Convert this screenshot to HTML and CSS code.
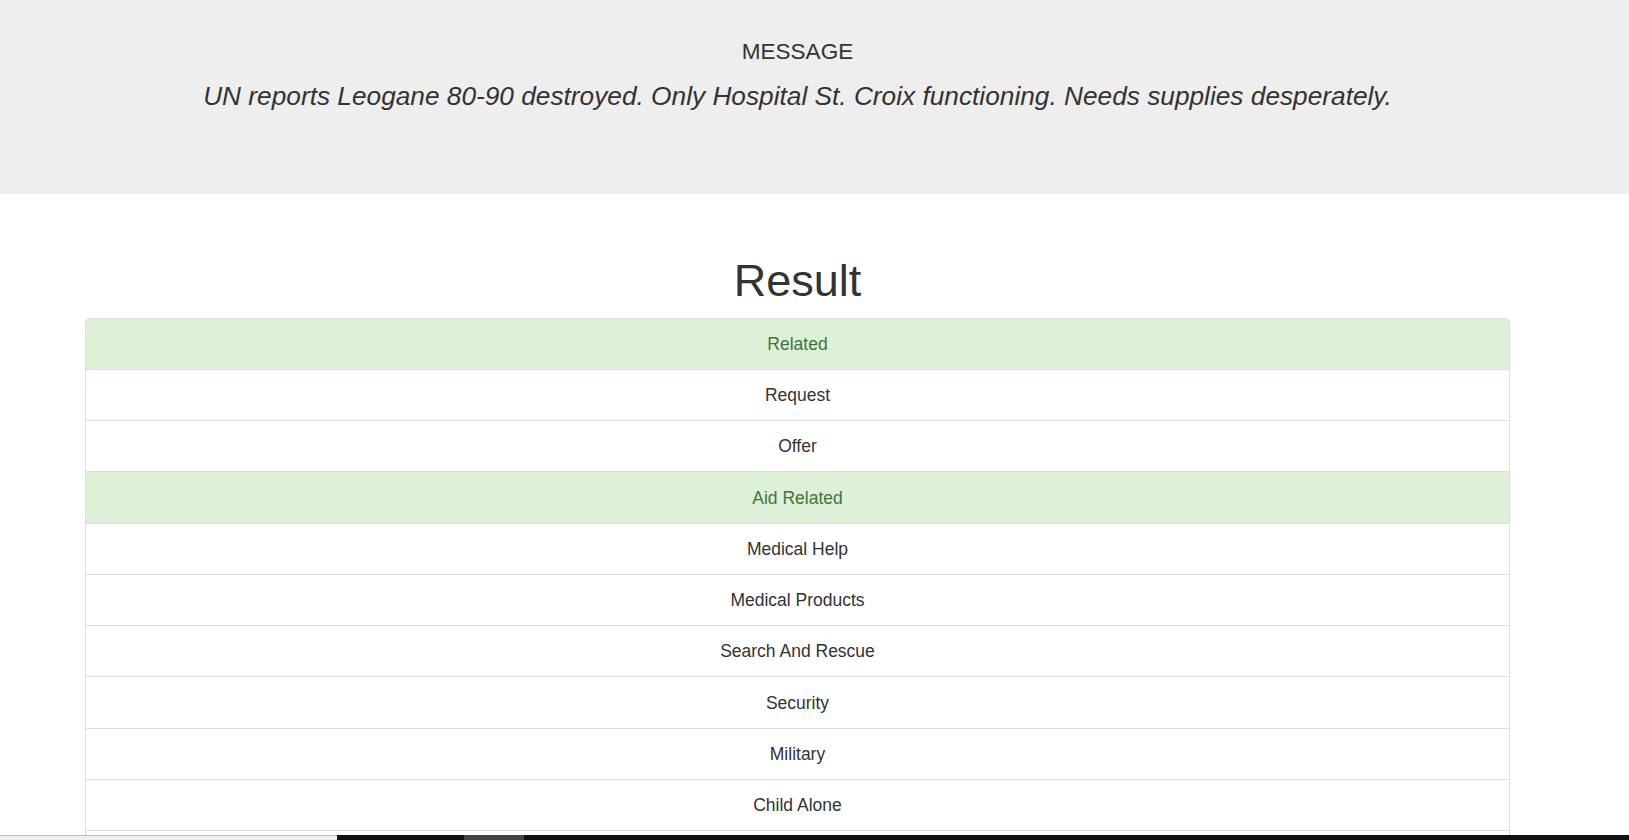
FILE: index.html
```html
<!DOCTYPE html>
<html lang="en">
<head>
<meta charset="utf-8">
<title>Disaster Response - Result</title>
<link rel="stylesheet" href="styles.css">
</head>
<body>
<div class="page">
  <header class="jumbotron">
    <div class="container">
      <div class="msg-label">MESSAGE</div>
      <p class="msg-text">UN reports Leogane 80-90 destroyed. Only Hospital St. Croix functioning. Needs supplies desperately.</p>
    </div>
  </header>
  <main class="main">
    <div class="container">
      <h1 class="title">Result</h1>
      <ul class="list-group">
        <li class="item item-success">Related</li>
        <li class="item">Request</li>
        <li class="item">Offer</li>
        <li class="item item-success">Aid Related</li>
        <li class="item">Medical Help</li>
        <li class="item">Medical Products</li>
        <li class="item">Search And Rescue</li>
        <li class="item">Security</li>
        <li class="item">Military</li>
        <li class="item">Child Alone</li>
        <li class="item item-empty" aria-hidden="true"></li>
      </ul>
    </div>
  </main>
  <div class="bottom-bar">
    <div class="bar-left"></div>
    <div class="bar-right"><div class="bar-thumb"></div></div>
  </div>
</div>
</body>
</html>
```

FILE: styles.css
```css
* {
  box-sizing: border-box;
}

html, body {
  margin: 0;
  padding: 0;
}

body {
  font-family: "Liberation Sans", Arial, Helvetica, sans-serif;
  color: #333333;
  background: #ffffff;
}

.page {
  height: 100vh;
  display: flex;
  flex-direction: column;
  overflow: hidden;
}

.container {
  width: 1425px;
  margin: 0 auto;
}

.jumbotron {
  flex: none;
  background: #eeeeee;
  height: 194px;
  padding: 38px 34px 0 0;
  text-align: center;
}

.msg-label {
  font-size: 22.5px;
  line-height: 27px;
}

.msg-text {
  margin: 13px 0 0;
  font-size: 26.25px;
  line-height: 37.5px;
  font-style: italic;
}

.main {
  flex: 1;
  min-height: 0;
  overflow: hidden;
  padding-right: 34px;
}

.title {
  margin: 62px 0 12px;
  font-size: 45px;
  line-height: 49.5px;
  font-weight: 500;
  text-align: center;
}

.list-group {
  list-style: none;
  margin: 0;
  padding: 0;
}

.item {
  display: block;
  padding: 13.25px 19px 12px;
  margin-bottom: -1px;
  border: 1px solid #dddddd;
  background: #ffffff;
  font-size: 17.5px;
  line-height: 25px;
  text-align: center;
}

.item:first-child {
  border-top-left-radius: 5px;
  border-top-right-radius: 5px;
}

.item-empty {
  height: 51.25px;
}

.item-success {
  background: #dff0d8;
  color: #3c763d;
}

.bottom-bar {
  flex: none;
  height: 5px;
  display: flex;
}

.bar-left {
  width: 337px;
  background: #f0f0f0;
  border-top: 1px solid #bdbdbd;
}

.bar-right {
  flex: 1;
  background: #111111;
  padding-left: 127px;
}

.bar-thumb {
  width: 60px;
  height: 100%;
  background: #444444;
}
```
